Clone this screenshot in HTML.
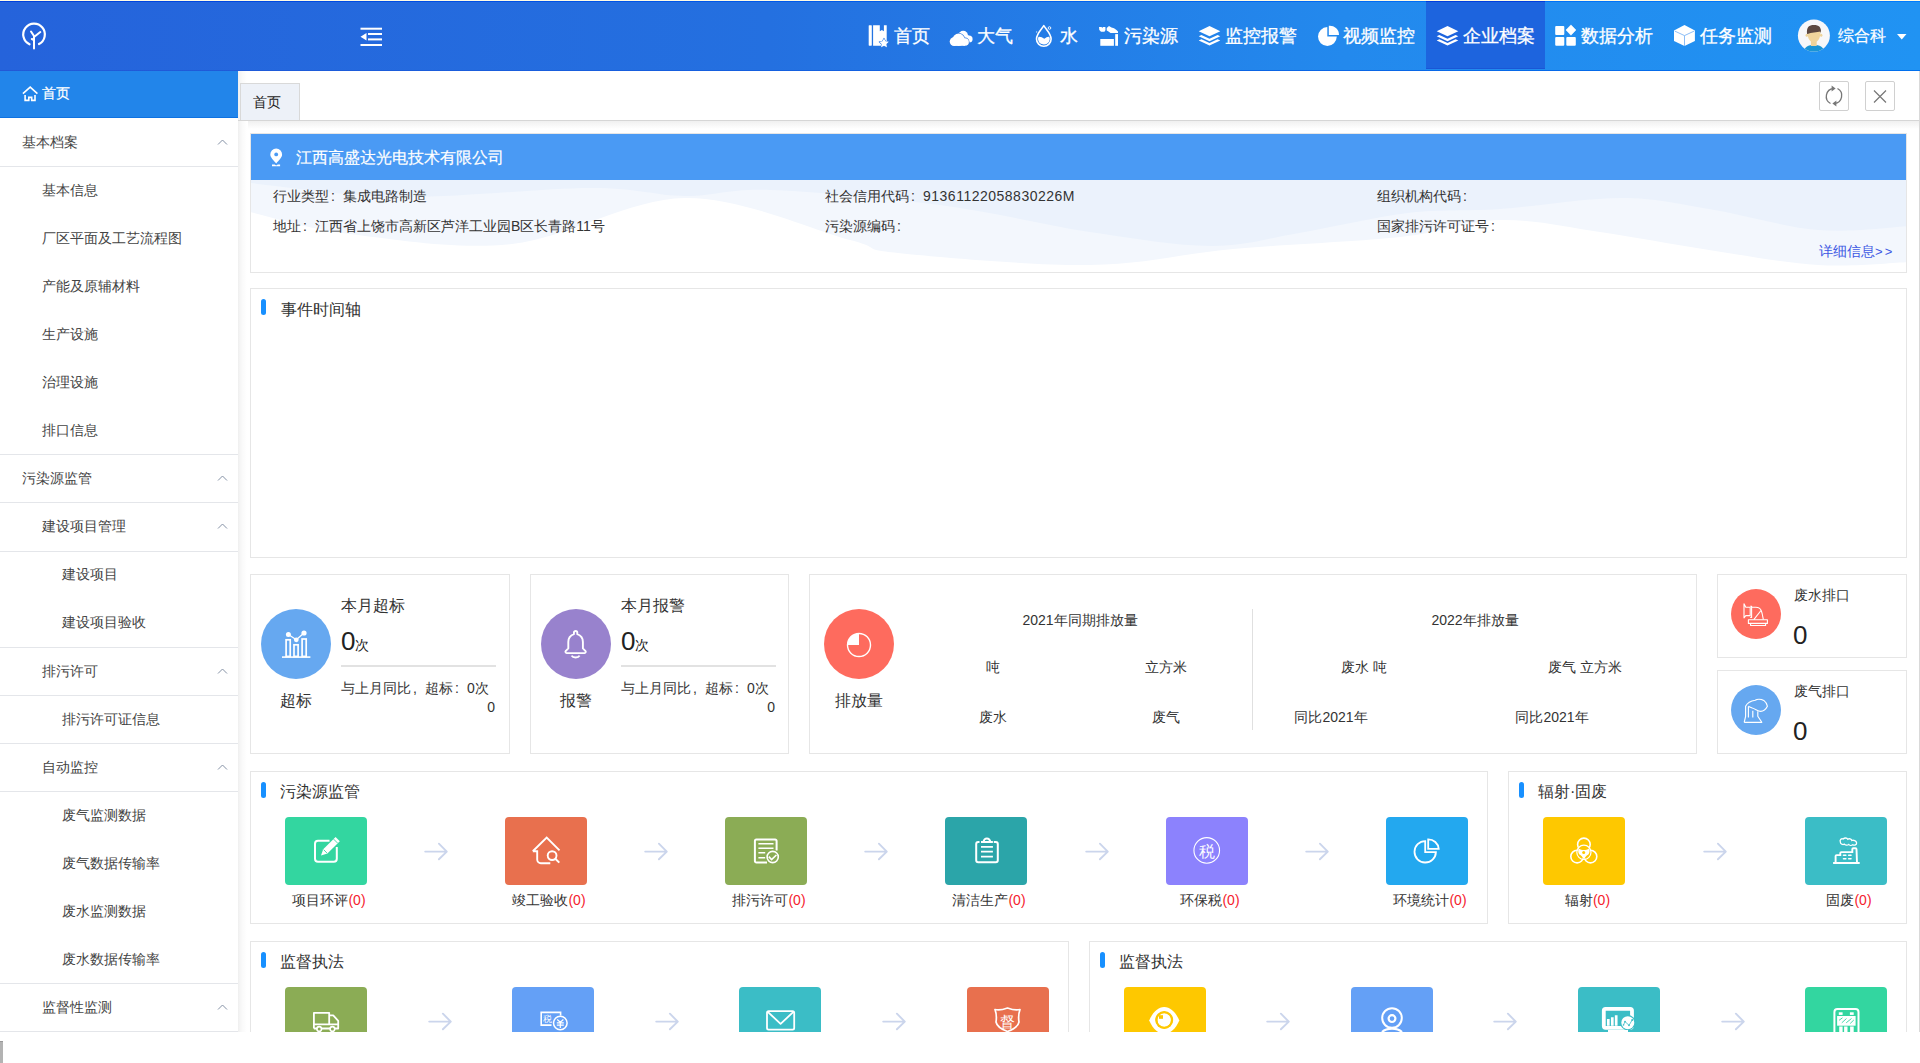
<!DOCTYPE html><html><head><meta charset="utf-8"><style>
*{box-sizing:border-box}
html,body{margin:0;padding:0}
body{width:1920px;height:1063px;overflow:hidden;position:relative;background:#fff;font-family:'Liberation Sans',sans-serif;color:#333}
.ab{position:absolute}
.t{position:absolute;white-space:nowrap;line-height:1}
svg{position:absolute;overflow:visible}
.card{position:absolute;border:1px solid #e6e6e6;background:#fff}
.bar{position:absolute;width:5px;height:16px;border-radius:3px;background:#1890ff}
.tile{position:absolute;width:82px;height:68px;border-radius:4px}
.lbl{position:absolute;font-size:14px;line-height:14px;white-space:nowrap;color:#333;text-align:center;width:160px}
.lbl span{color:#f5222d}
.fc{display:inline-block;width:1em;padding-left:0.15em}
</style></head><body>

<div class="ab" style="left:0;top:0;width:1920px;height:1px;background:#fffbe3"></div>
<div class="ab" style="left:0;top:1px;width:1920px;height:70px;background:linear-gradient(90deg,#2563db 0%,#2470e0 40%,#2389ed 70%,#2093f3 100%)"></div>
<div class="ab" style="left:0;top:1px;width:1920px;height:1px;background:linear-gradient(90deg,#0040dc,#007cff)"></div>
<div class="ab" style="left:0;top:70px;width:1920px;height:1px;background:linear-gradient(90deg,#2358d6,#0a66e6 70%,#0070ee)"></div>
<svg style="left:0;top:0" width="70" height="70" viewBox="0 0 70 70">
<path d="M29.5 44.3 A10.8 10.8 0 1 1 39 44.1" fill="none" stroke="#fff" stroke-width="2.2" stroke-linecap="round"/>
<path d="M34 48.5 L34 36 L31 31.5 M34 37 L40.3 32 M34 40 L31.8 39" fill="none" stroke="#fff" stroke-width="2" stroke-linecap="round" stroke-linejoin="round"/>
</svg>
<svg style="left:360px;top:27px" width="23" height="20" viewBox="0 0 23 20">
<rect x="0.5" y="0.7" width="21.5" height="2" fill="#fff"/>
<rect x="8" y="6" width="14" height="2" fill="#fff"/>
<rect x="8" y="11.4" width="14" height="2" fill="#fff"/>
<rect x="0.5" y="17" width="21.5" height="2" fill="#fff"/>
<path d="M0.5 9.7 L6.5 6 L6.5 13.5 Z" fill="#fff"/>
</svg>
<div class="ab" style="left:1426px;top:2px;width:119px;height:67px;background:#1d64de;border-bottom:1px solid #1a56d6"></div>
<div class="ab" style="left:1426px;top:1px;width:119px;height:1px;background:#003ede"></div>
<div class="t" style="left:894px;top:27px;font-size:18px;color:#fff;-webkit-text-stroke:0.3px #fff">首页</div>
<div class="t" style="left:977px;top:27px;font-size:18px;color:#fff;-webkit-text-stroke:0.3px #fff">大气</div>
<div class="t" style="left:1060px;top:27px;font-size:18px;color:#fff;-webkit-text-stroke:0.3px #fff">水</div>
<div class="t" style="left:1124px;top:27px;font-size:18px;color:#fff;-webkit-text-stroke:0.3px #fff">污染源</div>
<div class="t" style="left:1225px;top:27px;font-size:18px;color:#fff;-webkit-text-stroke:0.3px #fff">监控报警</div>
<div class="t" style="left:1343px;top:27px;font-size:18px;color:#fff;-webkit-text-stroke:0.3px #fff">视频监控</div>
<div class="t" style="left:1463px;top:27px;font-size:18px;color:#fff;-webkit-text-stroke:0.3px #fff">企业档案</div>
<div class="t" style="left:1581px;top:27px;font-size:18px;color:#fff;-webkit-text-stroke:0.3px #fff">数据分析</div>
<div class="t" style="left:1700px;top:27px;font-size:18px;color:#fff;-webkit-text-stroke:0.3px #fff">任务监测</div>
<svg style="left:864px;top:22px" width="30" height="28" viewBox="0 0 30 28">
<rect x="4.7" y="3.2" width="3.1" height="20.5" rx="0.6" fill="#fff"/>
<path d="M9.1 3.2 H15.8 V9.3 L17.85 8.1 L19.9 9.3 V3.2 H22.7 V23.7 H9.1 Z" fill="#fff"/>
<path d="M20 16.4 l1.45 2.95 3.25.47-2.35 2.29.55 3.24-2.9-1.53-2.9 1.53.55-3.24-2.35-2.29 3.25-.47z" fill="#fff" stroke="#2a78e4" stroke-width="1.1" stroke-linejoin="round"/>
<path d="M20 16.4 l1.45 2.95 3.25.47-2.35 2.29.55 3.24-2.9-1.53-2.9 1.53.55-3.24-2.35-2.29 3.25-.47z" fill="#fff"/>
</svg>
<svg style="left:946px;top:22px" width="30" height="28" viewBox="0 0 30 28">
<circle cx="17.2" cy="13.6" r="4.8" fill="#fff"/><circle cx="23" cy="17" r="3.6" fill="#fff"/><rect x="17" y="13.5" width="6" height="7" fill="#fff"/>
<g stroke="#2a78e4" stroke-width="1.2"><circle cx="8" cy="19.6" r="4.3"/><circle cx="12.6" cy="17.8" r="6.2"/><circle cx="19.1" cy="20" r="3.8"/></g>
<g fill="#fff"><circle cx="8" cy="19.6" r="4.3"/><circle cx="12.6" cy="17.8" r="6.2"/><circle cx="19.1" cy="20" r="3.8"/><rect x="8" y="18" width="11" height="5.8"/></g>
</svg>
<svg style="left:1030px;top:22px" width="28" height="28" viewBox="0 0 28 28">
<path d="M13.8 3.6 C11 8 6.5 12 6.5 16.9 A7.3 7.3 0 0 0 21.1 16.9 C21.1 12 16.6 8 13.8 3.6Z" fill="none" stroke="#fff" stroke-width="1.6" stroke-linejoin="round"/>
<path d="M8.4 14.9 C10.5 14.5 12.2 15.6 14.3 16.8 C16.2 15.6 17.6 14.6 19.3 14.9 C19.8 16 19.9 16.8 19.6 18 A5.9 5.9 0 0 1 8.1 17.8 C7.9 16.8 8 15.8 8.4 14.9Z" fill="#fff"/>
<circle cx="19.5" cy="6" r="1.3" fill="none" stroke="#fff" stroke-width="0.9"/>
<circle cx="6.6" cy="10" r="0.7" fill="#fff" opacity="0.7"/>
</svg>
<svg style="left:1094px;top:22px" width="28" height="28" viewBox="0 0 28 28">
<rect x="6.3" y="17" width="13.6" height="6.8" fill="#fff"/><rect x="21.2" y="12.1" width="2.8" height="11.7" fill="#fff"/>
<path d="M5 5 L7.6 5 L8.2 6.2 L8.8 5 L11.4 5 L11.5 8 L10.5 9.7 L7 9.7 L5.3 8Z" fill="#fff"/>
<path d="M12.7 6 L15 4 L17.5 5.5 L20 6.3 L22.5 8 L24 9.5 L24 11 L16.5 11 L14.5 9.5 L12.7 8.5Z" fill="#fff"/>
</svg>
<svg style="left:1194px;top:22px" width="30" height="28" viewBox="0 0 30 28">
<path d="M15.5 4 L26.3 9.3 L15.5 14.2 L4.7 9.3 Z" fill="#fff"/>
<path d="M4.7 14.3 L7.4 12.95 L15.5 16.8 L23.6 12.95 L26.3 14.3 L15.5 19.3 Z" fill="#fff"/>
<path d="M4.7 18.5 L7.4 17.15 L15.5 21 L23.6 17.15 L26.3 18.5 L15.5 23.5 Z" fill="#fff"/>
</svg>
<svg style="left:1313px;top:22px" width="28" height="28" viewBox="0 0 28 28">
<path d="M14.3 5.1 A9.4 9.4 0 1 0 23.8 14.6 H14.3 Z" fill="#fff"/><path d="M15.8 3.7 A9.2 9.2 0 0 1 26 12.9 H15.8 Z" fill="#fff"/>
</svg>
<svg style="left:1432px;top:22px" width="30" height="28" viewBox="0 0 30 28">
<path d="M15.5 4 L26.3 9.3 L15.5 14.2 L4.7 9.3 Z" fill="#fff"/>
<path d="M4.7 14.3 L7.4 12.95 L15.5 16.8 L23.6 12.95 L26.3 14.3 L15.5 19.3 Z" fill="#fff"/>
<path d="M4.7 18.5 L7.4 17.15 L15.5 21 L23.6 17.15 L26.3 18.5 L15.5 23.5 Z" fill="#fff"/>
</svg>
<svg style="left:1551px;top:22px" width="28" height="28" viewBox="0 0 28 28">
<rect x="4.2" y="4" width="9.1" height="8.9" rx="1" fill="#fff"/><path d="M19.95 2.9 L24.9 8 L19.95 13.2 L15 8Z" fill="#fff" stroke="#fff" stroke-width="0.6" stroke-linejoin="round"/>
<rect x="4.2" y="15" width="9.1" height="8.8" rx="1" fill="#fff"/><rect x="15.3" y="15" width="9.5" height="8.8" rx="1" fill="#fff"/>
</svg>
<svg style="left:1670px;top:22px" width="28" height="28" viewBox="0 0 28 28">
<path d="M14.5 2.9 L24.9 8.4 V19 L14.5 24 L4 19 V8.4Z" fill="#fff"/>
<path d="M4.8 9.1 L14.5 13.6 L24.1 9.1 M14.5 13.6 V24" fill="none" stroke="#7fb6f5" stroke-width="0.9"/>
</svg>
<svg style="left:1794px;top:16px" width="40" height="40" viewBox="0 0 40 40">
<defs><clipPath id="av"><circle cx="19.9" cy="19.6" r="16"/></clipPath></defs>
<circle cx="19.9" cy="19.6" r="16" fill="#f7f7f9"/>
<g clip-path="url(#av)">
<path d="M9.5 37 C10 31 14 29 20 29 C26 29 30 31 30.5 37Z" fill="#1a94d4"/>
<rect x="16.9" y="23" width="5.8" height="7" fill="#eed39a"/>
<ellipse cx="12.8" cy="19.2" rx="1.2" ry="1.5" fill="#eed39a"/><ellipse cx="27.2" cy="19.2" rx="1.2" ry="1.5" fill="#eed39a"/>
<path d="M13.3 15 C13.3 22 15.5 26.3 19.9 26.3 C24.3 26.3 26.5 22 26.5 15Z" fill="#f0d59c"/>
<path d="M13 17.7 C12.5 11 15 9 19.9 9 C25 9 27.5 11 27 17.5 L26.5 15.5 C23 16 17 16.5 13.5 18Z" fill="#5c4841"/>
</g></svg>
<div class="t" style="left:1838px;top:28px;font-size:16px;color:#fff;-webkit-text-stroke:0.25px #fff">综合科</div>
<svg style="left:1897px;top:34px" width="10" height="6" viewBox="0 0 10 6"><path d="M0 0 H9.5 L4.75 5.5Z" fill="#fff"/></svg>
<div class="ab" style="left:0;top:71px;width:238px;height:47px;background:#2285ea"></div>
<div class="ab" style="left:0;top:117px;width:238px;height:1px;background:#0e72e2"></div>
<svg style="left:22px;top:86px" width="16" height="16" viewBox="0 0 16 16">
<path d="M0.9 7.6 L8.2 1.1 L15.4 7.6" fill="none" stroke="#fff" stroke-width="1.6"/>
<path d="M3.1 9.1 V14.4 H6.8 V11.4 H9.7 V14.4 H13 V9.1" fill="none" stroke="#fff" stroke-width="1.6"/>
</svg>
<div class="t" style="left:42px;top:86px;font-size:14px;color:#fff;-webkit-text-stroke:0.2px #fff">首页</div>
<div class="t" style="left:22px;top:135px;font-size:14px;color:#444">基本档案</div>
<svg style="left:217px;top:139px" width="11" height="7" viewBox="0 0 11 7"><path d="M1 5.5 L5.5 1 L10 5.5" fill="none" stroke="#8592a6" stroke-width="1"/></svg>
<div class="t" style="left:42px;top:183px;font-size:14px;color:#444">基本信息</div>
<div class="t" style="left:42px;top:231px;font-size:14px;color:#444">厂区平面及工艺流程图</div>
<div class="t" style="left:42px;top:279px;font-size:14px;color:#444">产能及原辅材料</div>
<div class="t" style="left:42px;top:327px;font-size:14px;color:#444">生产设施</div>
<div class="t" style="left:42px;top:375px;font-size:14px;color:#444">治理设施</div>
<div class="t" style="left:42px;top:423px;font-size:14px;color:#444">排口信息</div>
<div class="t" style="left:22px;top:471px;font-size:14px;color:#444">污染源监管</div>
<svg style="left:217px;top:475px" width="11" height="7" viewBox="0 0 11 7"><path d="M1 5.5 L5.5 1 L10 5.5" fill="none" stroke="#8592a6" stroke-width="1"/></svg>
<div class="t" style="left:42px;top:519px;font-size:14px;color:#444">建设项目管理</div>
<svg style="left:217px;top:523px" width="11" height="7" viewBox="0 0 11 7"><path d="M1 5.5 L5.5 1 L10 5.5" fill="none" stroke="#8592a6" stroke-width="1"/></svg>
<div class="t" style="left:62px;top:567px;font-size:14px;color:#444">建设项目</div>
<div class="t" style="left:62px;top:615px;font-size:14px;color:#444">建设项目验收</div>
<div class="t" style="left:42px;top:664px;font-size:14px;color:#444">排污许可</div>
<svg style="left:217px;top:668px" width="11" height="7" viewBox="0 0 11 7"><path d="M1 5.5 L5.5 1 L10 5.5" fill="none" stroke="#8592a6" stroke-width="1"/></svg>
<div class="t" style="left:62px;top:712px;font-size:14px;color:#444">排污许可证信息</div>
<div class="t" style="left:42px;top:760px;font-size:14px;color:#444">自动监控</div>
<svg style="left:217px;top:764px" width="11" height="7" viewBox="0 0 11 7"><path d="M1 5.5 L5.5 1 L10 5.5" fill="none" stroke="#8592a6" stroke-width="1"/></svg>
<div class="t" style="left:62px;top:808px;font-size:14px;color:#444">废气监测数据</div>
<div class="t" style="left:62px;top:856px;font-size:14px;color:#444">废气数据传输率</div>
<div class="t" style="left:62px;top:904px;font-size:14px;color:#444">废水监测数据</div>
<div class="t" style="left:62px;top:952px;font-size:14px;color:#444">废水数据传输率</div>
<div class="t" style="left:42px;top:1000px;font-size:14px;color:#444">监督性监测</div>
<svg style="left:217px;top:1004px" width="11" height="7" viewBox="0 0 11 7"><path d="M1 5.5 L5.5 1 L10 5.5" fill="none" stroke="#8592a6" stroke-width="1"/></svg>
<div class="ab" style="left:0;top:166px;width:238px;height:1px;background:#e4e6ea"></div>
<div class="ab" style="left:0;top:454px;width:238px;height:1px;background:#e4e6ea"></div>
<div class="ab" style="left:0;top:502px;width:238px;height:1px;background:#e4e6ea"></div>
<div class="ab" style="left:0;top:551px;width:238px;height:1px;background:#e4e6ea"></div>
<div class="ab" style="left:0;top:647px;width:238px;height:1px;background:#e4e6ea"></div>
<div class="ab" style="left:0;top:695px;width:238px;height:1px;background:#e4e6ea"></div>
<div class="ab" style="left:0;top:743px;width:238px;height:1px;background:#e4e6ea"></div>
<div class="ab" style="left:0;top:791px;width:238px;height:1px;background:#e4e6ea"></div>
<div class="ab" style="left:0;top:983px;width:238px;height:1px;background:#e4e6ea"></div>
<div class="ab" style="left:0;top:1031px;width:238px;height:1px;background:#e4e6ea"></div>
<div class="ab" style="left:238px;top:71px;width:9px;height:961px;background:linear-gradient(90deg,#efefef 0,#f5f5f5 2px,#fafafa 4.5px,rgba(255,255,255,0) 9px)"></div>
<div class="ab" style="left:240px;top:83px;width:60px;height:37px;background:#edf1f8;border:1px solid #d9d9d9;border-bottom:none"></div>
<div class="t" style="left:253px;top:95px;font-size:14px;color:#222">首页</div>
<div class="ab" style="left:238px;top:120px;width:1681px;height:1px;background:#d6d6d6"></div>
<div class="ab" style="left:248px;top:121px;width:1671px;height:8px;background:linear-gradient(180deg,#f0f0f0,rgba(255,255,255,0))"></div>
<div class="ab" style="left:1919px;top:71px;width:1px;height:961px;background:#d9d9d9"></div>
<div class="ab" style="left:1819px;top:81px;width:30px;height:30px;border:1px solid #d0d0d0;border-radius:2px;background:#fff"></div>
<div class="ab" style="left:1865px;top:81px;width:30px;height:30px;border:1px solid #d0d0d0;border-radius:2px;background:#fff"></div>
<svg style="left:1819px;top:81px" width="30" height="30" viewBox="0 0 30 30">
<path d="M11.5 22.5 A8 8 0 0 1 14.5 7.5" fill="none" stroke="#777" stroke-width="1.3"/>
<path d="M18.5 7.5 A8 8 0 0 1 15.5 22.5" fill="none" stroke="#777" stroke-width="1.3"/>
<path d="M12.6 4.6 L16.6 7.5 L12.6 10.4 Z" fill="#777"/>
<path d="M17.4 19.6 L13.4 22.5 L17.4 25.4 Z" fill="#777"/>
</svg>
<svg style="left:1865px;top:81px" width="30" height="30" viewBox="0 0 30 30">
<path d="M9 9.5 L21 21.5 M21 9.5 L9 21.5" fill="none" stroke="#777" stroke-width="1.2"/>
</svg>
<div class="card" style="left:250px;top:133px;width:1657px;height:140px;background:#fff"></div>
<svg style="left:251px;top:180px;overflow:hidden" width="1655" height="92" viewBox="0 0 1655 92"><rect width="1655" height="92" fill="#ebf2fc"/><path d="M-1 3 C24.0 5.3 92.3 16.2 149 17 C205.7 17.8 291.5 8.2 339 8 C386.5 7.8 404.0 15.7 434 16 C464.0 16.3 476.5 8.5 519 10 C561.5 11.5 635.7 18.0 689 25 C742.3 32.0 793.8 45.2 839 52 C884.2 58.8 925.2 65.8 960 66 C994.8 66.2 1015.2 58.5 1048 53 C1080.8 47.5 1123.5 37.0 1157 33 C1190.5 29.0 1213.5 31.5 1249 29 C1284.5 26.5 1335.2 18.0 1370 18 C1404.8 18.0 1425.2 23.7 1458 29 C1490.8 34.3 1533.5 47.2 1567 50 C1600.5 52.8 1643.7 46.7 1659 46 V92 H0 Z" fill="#f3f7fd"/><path d="M-1 32 C15.7 35.7 55.3 48.7 99 54 C142.7 59.3 205.2 70.0 261 64 C316.8 58.0 377.7 18.7 434 18 C490.3 17.3 563.5 50.8 599 60 C634.5 69.2 607.0 68.8 647 73 C687.0 77.2 783.2 85.7 839 85 C894.8 84.3 930.3 73.7 982 69 C1033.7 64.3 1104.5 61.8 1149 57 C1193.5 52.2 1215.7 40.8 1249 40 C1282.3 39.2 1314.2 47.0 1349 52 C1383.8 57.0 1421.7 64.5 1458 70 C1494.3 75.5 1533.5 83.0 1567 85 C1600.5 87.0 1643.7 82.5 1659 82 V92 H0 Z" fill="#fff"/></svg>
<div class="ab" style="left:251px;top:134px;width:1655px;height:46px;background:#4a9af4"></div>
<svg style="left:270px;top:148px" width="13" height="19" viewBox="0 0 13 19">
<path d="M6.2 15.6 C3.6 12.2 0.3 9.6 0.3 6.5 A5.9 5.9 0 0 1 12.1 6.5 C12.1 9.6 8.8 12.2 6.2 15.6Z" fill="#fff"/>
<circle cx="6.2" cy="6.4" r="1.9" fill="#4a9af4"/>
<path d="M2 16.6 H4.6 L6.2 17.4 L7.8 16.6 H10.1 V18.2 H2Z" fill="#fff"/>
</svg>
<div class="t" style="left:296px;top:150px;font-size:16px;color:#fff;-webkit-text-stroke:0.2px #fff">江西高盛达光电技术有限公司</div>
<div class="t" style="left:273px;top:189px;font-size:14px;color:#333">行业类型<span class="fc">:</span>集成电路制造</div>
<div class="t" style="left:825px;top:189px;font-size:14px;color:#333">社会信用代码<span class="fc">:</span><span style="letter-spacing:0.5px">91361122058830226M</span></div>
<div class="t" style="left:1377px;top:189px;font-size:14px;color:#333">组织机构代码<span class="fc">:</span></div>
<div class="t" style="left:273px;top:219px;font-size:14px;color:#333">地址<span class="fc">:</span>江西省上饶市高新区芦洋工业园B区长青路11号</div>
<div class="t" style="left:825px;top:219px;font-size:14px;color:#333">污染源编码<span class="fc">:</span></div>
<div class="t" style="left:1377px;top:219px;font-size:14px;color:#333">国家排污许可证号<span class="fc">:</span></div>
<div class="t" style="left:1819px;top:244px;font-size:14px;color:#3d57e3">详细信息<span style="font-size:13px;letter-spacing:2.2px">&gt;&gt;</span></div>
<div class="card" style="left:250px;top:288px;width:1657px;height:270px"></div>
<div class="bar" style="left:261px;top:299px"></div>
<div class="t" style="left:281px;top:302px;font-size:16px;color:#333">事件时间轴</div>
<div class="card" style="left:250px;top:574px;width:260px;height:180px"></div>
<div class="ab" style="left:261px;top:609px;width:70px;height:70px;border-radius:50%;background:#66a8f0"></div>
<svg style="left:276px;top:624px" width="40" height="40" viewBox="0 0 40 40">
<path d="M12.4 10.5 L20.3 15.8 L28 9" fill="none" stroke="#fff" stroke-width="1.3"/>
<circle cx="12.4" cy="10.5" r="2.5" fill="#fff"/><circle cx="20.3" cy="15.8" r="2.4" fill="#fff"/><circle cx="28" cy="9" r="2.6" fill="#fff"/>
<rect x="10.1" y="15.8" width="4.1" height="16.6" fill="none" stroke="#fff" stroke-width="1.7"/>
<rect x="18" y="20.8" width="4.1" height="11.6" fill="none" stroke="#fff" stroke-width="1.7"/>
<rect x="26.1" y="15" width="4.1" height="17.4" fill="none" stroke="#fff" stroke-width="1.7"/>
<path d="M6 33.1 H34.4" stroke="#fff" stroke-width="1.6"/>
</svg>
<div class="t" style="left:266px;width:60px;text-align:center;top:693px;font-size:16px;color:#333">超标</div>
<div class="t" style="left:341px;top:598px;font-size:16px;color:#333">本月超标</div>
<div class="t" style="left:341px;top:628px;font-size:26px;color:#222">0<span style="font-size:14px;position:relative;top:0px">次</span></div>
<div class="ab" style="left:341px;top:665px;width:155px;height:2px;background:#e2e2e2"></div>
<div class="t" style="left:341px;top:681px;font-size:14px;color:#333">与上月同比<span class="fc">,</span>超标<span class="fc">:</span>0次</div>
<div class="t" style="left:445px;width:50px;text-align:right;top:700px;font-size:14px;color:#333">0</div>
<div class="card" style="left:530px;top:574px;width:259px;height:180px"></div>
<div class="ab" style="left:541px;top:609px;width:70px;height:70px;border-radius:50%;background:#9882cd"></div>
<svg style="left:556px;top:624px" width="40" height="40" viewBox="0 0 40 40">
<path d="M19.6 7 a1.7 1.7 0 0 1 1.7 1.7 V10.2 C24.6 11.4 26.9 14 26.9 18 V24.4 L29.3 26.8 a1.3 1.3 0 0 1 -0.9 2.3 H10.8 a1.3 1.3 0 0 1 -0.9 -2.3 L12.3 24.4 V18 C12.3 14 14.6 11.4 17.9 10.2 V8.7 a1.7 1.7 0 0 1 1.7 -1.7 Z" fill="none" stroke="#fff" stroke-width="1.9" stroke-linejoin="round"/>
<path d="M15.6 31.6 C17 34.2 22.2 34.2 23.6 31.6" fill="none" stroke="#fff" stroke-width="1.9"/>
</svg>
<div class="t" style="left:546px;width:60px;text-align:center;top:693px;font-size:16px;color:#333">报警</div>
<div class="t" style="left:621px;top:598px;font-size:16px;color:#333">本月报警</div>
<div class="t" style="left:621px;top:628px;font-size:26px;color:#222">0<span style="font-size:14px;position:relative;top:0px">次</span></div>
<div class="ab" style="left:621px;top:665px;width:155px;height:2px;background:#e2e2e2"></div>
<div class="t" style="left:621px;top:681px;font-size:14px;color:#333">与上月同比<span class="fc">,</span>超标<span class="fc">:</span>0次</div>
<div class="t" style="left:725px;width:50px;text-align:right;top:700px;font-size:14px;color:#333">0</div>
<div class="card" style="left:809px;top:574px;width:888px;height:180px"></div>
<div class="ab" style="left:824px;top:609px;width:70px;height:70px;border-radius:50%;background:#fe6b5e"></div>
<svg style="left:844px;top:630px" width="30" height="30" viewBox="0 0 30 30">
<circle cx="15" cy="15" r="11.5" fill="none" stroke="#fff" stroke-width="1.4"/>
<path d="M15 15 V3.5 A11.5 11.5 0 0 0 3.5 15 Z" fill="#fff"/>
</svg>
<div class="t" style="left:829px;width:60px;text-align:center;top:693px;font-size:16px;color:#333">排放量</div>
<div class="t" style="left:980px;width:200px;text-align:center;top:613px;font-size:14px;color:#333">2021年同期排放量</div>
<div class="t" style="left:893px;width:200px;text-align:center;top:660px;font-size:14px;color:#333">吨</div>
<div class="t" style="left:1066px;width:200px;text-align:center;top:660px;font-size:14px;color:#333">立方米</div>
<div class="t" style="left:893px;width:200px;text-align:center;top:710px;font-size:14px;color:#333">废水</div>
<div class="t" style="left:1066px;width:200px;text-align:center;top:710px;font-size:14px;color:#333">废气</div>
<div class="ab" style="left:1252px;top:609px;width:1px;height:121px;background:#e0e0e0"></div>
<div class="t" style="left:1375px;width:200px;text-align:center;top:613px;font-size:14px;color:#333">2022年排放量</div>
<div class="t" style="left:1264px;width:200px;text-align:center;top:660px;font-size:14px;color:#333">废水 吨</div>
<div class="t" style="left:1485px;width:200px;text-align:center;top:660px;font-size:14px;color:#333">废气 立方米</div>
<div class="t" style="left:1231px;width:200px;text-align:center;top:710px;font-size:14px;color:#333">同比2021年</div>
<div class="t" style="left:1452px;width:200px;text-align:center;top:710px;font-size:14px;color:#333">同比2021年</div>
<div class="card" style="left:1717px;top:574px;width:190px;height:84px"></div>
<div class="ab" style="left:1731px;top:589px;width:50px;height:50px;border-radius:50%;background:#fe6b5e"></div>
<svg style="left:1740px;top:598px" width="32" height="32" viewBox="0 0 32 32"><g fill="none" stroke="#fff" stroke-width="1.1" stroke-linejoin="round">
<path d="M4 5.8 L5.8 9.2 H10.2 V17.6 H5.8 L4 19.8 Z"/>
<path d="M10.2 8.2 H11.6 V19.4 H10.2"/>
<path d="M11.6 9.2 H15.8 C18.5 9.2 20.6 10.8 21.3 12.8 C22.3 15.2 22.8 18.8 23.3 21.6"/>
<path d="M13.8 21.6 L21 12.5"/>
<path d="M8.4 21.8 H27.4 V25.4 H8.4 Z"/>
<path d="M10.6 25.4 V27.5 H25.6 V25.4"/>
</g></svg>
<div class="t" style="left:1794px;top:588px;font-size:14px;color:#333">废水排口</div>
<div class="t" style="left:1793px;top:622px;font-size:26px;color:#222">0</div>
<div class="card" style="left:1717px;top:670px;width:190px;height:84px"></div>
<div class="ab" style="left:1731px;top:685px;width:50px;height:50px;border-radius:50%;background:#66a8f0"></div>
<svg style="left:1740px;top:694px" width="32" height="32" viewBox="0 0 32 32"><g fill="none" stroke="#fff" stroke-width="1.15" stroke-linejoin="round">
<path d="M4.2 28.3 H21.8 L17.8 22.3 V17.2"/>
<path d="M4.2 28.3 L5.6 22.3 V12.2 C7.5 8.5 11 6.8 15.2 6.2 C17 5 21 5 23.8 6.4 C25.8 8 27.3 10.5 27.4 12.3 C25.8 15.5 23.3 17.4 20.6 17.4 C18.2 17.4 15.4 15 12.3 14 C10.6 13.3 9 12.6 8.3 12.2"/>
<path d="M8.4 12.6 V23.6 M12.8 16.8 V23.6"/>
</g></svg>
<div class="t" style="left:1794px;top:684px;font-size:14px;color:#333">废气排口</div>
<div class="t" style="left:1793px;top:718px;font-size:26px;color:#222">0</div>
<div class="card" style="left:250px;top:771px;width:1238px;height:153px"></div>
<div class="bar" style="left:261px;top:782px"></div>
<div class="t" style="left:280px;top:784px;font-size:16px;color:#333">污染源监管</div>
<div class="card" style="left:1508px;top:771px;width:399px;height:153px"></div>
<div class="bar" style="left:1519px;top:782px"></div>
<div class="t" style="left:1538px;top:784px;font-size:16px;color:#333">辐射·固废</div>
<div class="card" style="left:250px;top:941px;width:819px;height:200px"></div>
<div class="bar" style="left:261px;top:952px"></div>
<div class="t" style="left:280px;top:954px;font-size:16px;color:#333">监督执法</div>
<div class="card" style="left:1089px;top:941px;width:818px;height:200px"></div>
<div class="bar" style="left:1100px;top:952px"></div>
<div class="t" style="left:1119px;top:954px;font-size:16px;color:#333">监督执法</div>
<div class="tile" style="left:285px;top:817px;background:#33d6a0"></div>
<div class="lbl" style="left:249px;top:893px">项目环评<span>(0)</span></div>
<div class="tile" style="left:505px;top:817px;background:#e8704e"></div>
<div class="lbl" style="left:469px;top:893px">竣工验收<span>(0)</span></div>
<div class="tile" style="left:725px;top:817px;background:#8bac55"></div>
<div class="lbl" style="left:689px;top:893px">排污许可<span>(0)</span></div>
<div class="tile" style="left:945px;top:817px;background:#2ba5a9"></div>
<div class="lbl" style="left:909px;top:893px">清洁生产<span>(0)</span></div>
<div class="tile" style="left:1166px;top:817px;background:#8c82fd"></div>
<div class="lbl" style="left:1130px;top:893px">环保税<span>(0)</span></div>
<div class="tile" style="left:1386px;top:817px;background:#23a8ef"></div>
<div class="lbl" style="left:1350px;top:893px">环境统计<span>(0)</span></div>
<svg style="left:306px;top:831px" width="40" height="40" viewBox="0 0 40 40"><path d="M23.5 9.7 H12 A3 3 0 0 0 9 12.7 V27.8 A3 3 0 0 0 12 30.8 H27.8 A3 3 0 0 0 30.8 27.8 V16" fill="none" stroke="#fff" stroke-width="2"/>
<path d="M15 24.5 L17.2 18.3 L29.6 6.1 L33.8 10.3 L21.4 22.5 Z" fill="#fff"/>
<path d="M17.6 18.6 L20.9 22 M27.6 8.1 L31.7 12.2" stroke="#33d6a0" stroke-width="0.9"/></svg>
<svg style="left:526px;top:831px" width="40" height="40" viewBox="0 0 40 40"><path d="M6.8 20.3 L20.7 6.6 L33.5 19.4 M6.8 20.3 H11.2 V28.6 A3.6 3.6 0 0 0 14.8 32.2 H24.3" fill="none" stroke="#fff" stroke-width="1.9" stroke-linejoin="miter"/>
<circle cx="26.1" cy="24.6" r="4.4" fill="none" stroke="#fff" stroke-width="1.9"/><path d="M29.3 27.8 L33.3 31.6" fill="none" stroke="#fff" stroke-width="2"/></svg>
<svg style="left:746px;top:831px" width="40" height="40" viewBox="0 0 40 40"><path d="M21 31.4 H10.4 A1.5 1.5 0 0 1 8.9 29.9 V10 A1.5 1.5 0 0 1 10.4 8.5 H29.1 A1.5 1.5 0 0 1 30.6 10 V19.5" fill="none" stroke="#fff" stroke-width="2"/>
<path d="M12.4 12.8 H27.5 M12.4 17.3 H27.5 M12.4 21.8 H19.2 M12.4 26.7 H19.2" fill="none" stroke="#fff" stroke-width="1.6"/>
<circle cx="26.7" cy="26" r="7" fill="#8bac55"/><circle cx="26.7" cy="26" r="5.6" fill="none" stroke="#fff" stroke-width="1.6"/>
<path d="M22.8 25.6 L25.6 28.5 L30.4 24" fill="none" stroke="#fff" stroke-width="1.7"/></svg>
<svg style="left:966px;top:831px" width="40" height="40" viewBox="0 0 40 40"><path d="M13.5 11 H12.2 A2 2 0 0 0 10.2 13 V29.2 A2 2 0 0 0 12.2 31.2 H29.8 A2 2 0 0 0 31.8 29.2 V13 A2 2 0 0 0 29.8 11 H27.8" fill="none" stroke="#fff" stroke-width="2"/>
<path d="M15 10.9 H26.9 M17.6 10.9 A3.3 3.3 0 0 1 24.2 10.9" fill="none" stroke="#fff" stroke-width="2"/>
<path d="M15 15.8 H26.9 M15 20.7 H26.9 M15 25.6 H26.9" fill="none" stroke="#fff" stroke-width="1.7"/></svg>
<svg style="left:1187px;top:831px" width="40" height="40" viewBox="0 0 40 40"><circle cx="19.75" cy="19.4" r="12.8" fill="none" stroke="#fff" stroke-width="1.1"/>
<text x="19.8" y="26.2" font-size="15.5" text-anchor="middle" fill="#fff" font-family="Liberation Sans,sans-serif">税</text></svg>
<svg style="left:1407px;top:831px" width="40" height="40" viewBox="0 0 40 40"><path d="M18.2 10.1 A10.7 10.7 0 1 0 28.9 21.1 H18.2 Z" fill="none" stroke="#fff" stroke-width="1.8" stroke-linejoin="miter"/>
<path d="M21.2 8.3 V17.8 H31.7 A10.5 10.5 0 0 0 21.2 8.3 Z" fill="none" stroke="#fff" stroke-width="1.8" stroke-linejoin="miter"/></svg>
<svg style="left:424px;top:842px" width="24" height="20" viewBox="0 0 24 20"><path d="M1.2 9.6 H22.6 M14.9 1.7 L22.8 9.6 L14.9 17.3" fill="none" stroke="#cbd5ec" stroke-width="1.9" stroke-linecap="round" stroke-linejoin="round"/></svg>
<svg style="left:644px;top:842px" width="24" height="20" viewBox="0 0 24 20"><path d="M1.2 9.6 H22.6 M14.9 1.7 L22.8 9.6 L14.9 17.3" fill="none" stroke="#cbd5ec" stroke-width="1.9" stroke-linecap="round" stroke-linejoin="round"/></svg>
<svg style="left:864px;top:842px" width="24" height="20" viewBox="0 0 24 20"><path d="M1.2 9.6 H22.6 M14.9 1.7 L22.8 9.6 L14.9 17.3" fill="none" stroke="#cbd5ec" stroke-width="1.9" stroke-linecap="round" stroke-linejoin="round"/></svg>
<svg style="left:1085px;top:842px" width="24" height="20" viewBox="0 0 24 20"><path d="M1.2 9.6 H22.6 M14.9 1.7 L22.8 9.6 L14.9 17.3" fill="none" stroke="#cbd5ec" stroke-width="1.9" stroke-linecap="round" stroke-linejoin="round"/></svg>
<svg style="left:1305px;top:842px" width="24" height="20" viewBox="0 0 24 20"><path d="M1.2 9.6 H22.6 M14.9 1.7 L22.8 9.6 L14.9 17.3" fill="none" stroke="#cbd5ec" stroke-width="1.9" stroke-linecap="round" stroke-linejoin="round"/></svg>
<div class="tile" style="left:1543px;top:817px;background:#fec800"></div>
<div class="lbl" style="left:1507.5px;top:893px">辐射<span>(0)</span></div>
<div class="tile" style="left:1805px;top:817px;background:#3bbdc6"></div>
<div class="lbl" style="left:1769px;top:893px">固废<span>(0)</span></div>
<svg style="left:1703px;top:842px" width="24" height="20" viewBox="0 0 24 20"><path d="M1.2 9.6 H22.6 M14.9 1.7 L22.8 9.6 L14.9 17.3" fill="none" stroke="#cbd5ec" stroke-width="1.9" stroke-linecap="round" stroke-linejoin="round"/></svg>
<svg style="left:1564px;top:831px" width="40" height="40" viewBox="0 0 40 40"><g fill="none" stroke="#fff" stroke-width="1.6"><circle cx="19.9" cy="13.4" r="6.3"/><circle cx="13.1" cy="25.6" r="6.3"/><circle cx="26.5" cy="25.6" r="6.3"/></g>
<circle cx="19.9" cy="21.3" r="6.4" fill="#fec800"/>
<circle cx="19.9" cy="21.3" r="7.1" fill="none" stroke="#fff" stroke-width="1.2"/>
<path d="M14.6 17.4 C16.5 18.6 18 18.9 19.9 18.9 C21.8 18.9 23.3 18.6 25.2 17.4 C25.9 19.8 25.6 21.8 24.4 23.6 C22.6 24.6 21.2 26 20.8 27.6 H19 C18.6 26 17.2 24.6 15.4 23.6 C14.2 21.8 13.9 19.8 14.6 17.4Z" fill="#fff"/>
<circle cx="19.7" cy="21.4" r="1.5" fill="#fec800"/>
</svg>
<svg style="left:1826px;top:831px" width="40" height="40" viewBox="0 0 40 40"><path d="M7.1 32 H33.7" fill="none" stroke="#fff" stroke-width="2"/>
<path d="M9.6 32 V25.1 A1 1 0 0 1 10.6 24.1 H14.3 V22.1 A1 1 0 0 1 15.3 21.1 H26.3 V18.3 A1 1 0 0 1 27.3 17.3 H29.5 A1 1 0 0 1 30.5 18.3 L31 32" fill="none" stroke="#fff" stroke-width="1.9"/>
<path d="M17.5 24.3 H19.8 M22.7 24.3 H25 M17.5 27.8 H19.8 M22.7 27.8 H25" fill="none" stroke="#fff" stroke-width="1.6" stroke-linecap="round"/>
<path d="M14.3 11 C13.5 8.5 15.5 7.2 17.3 8 C18.5 6.5 21 6.7 21.8 8.3 C23 7.3 25.5 7.8 25.8 9.5 C27.5 8.8 30.3 9.8 30.6 11.8 C30.8 13.8 28.5 14.8 26.8 13.8 C25.5 14.7 23.5 14.5 22.8 13.5 C21.5 14.5 19 14.3 18.3 13.2 C16.8 14 14.5 13.2 14.3 11Z" fill="none" stroke="#fff" stroke-width="1.3"/></svg>
<div class="tile" style="left:285px;top:987px;background:#8bac55"></div>
<div class="tile" style="left:512px;top:987px;background:#64a0f6"></div>
<div class="tile" style="left:739px;top:987px;background:#3bbdc6"></div>
<div class="tile" style="left:967px;top:987px;background:#e8704e"></div>
<div class="tile" style="left:1124px;top:987px;background:#fec800"></div>
<div class="tile" style="left:1351px;top:987px;background:#64a0f6"></div>
<div class="tile" style="left:1578px;top:987px;background:#3bbdc6"></div>
<div class="tile" style="left:1805px;top:987px;background:#33d6a0"></div>
<svg style="left:428px;top:1012px" width="24" height="20" viewBox="0 0 24 20"><path d="M1.2 9.6 H22.6 M14.9 1.7 L22.8 9.6 L14.9 17.3" fill="none" stroke="#cbd5ec" stroke-width="1.9" stroke-linecap="round" stroke-linejoin="round"/></svg>
<svg style="left:655px;top:1012px" width="24" height="20" viewBox="0 0 24 20"><path d="M1.2 9.6 H22.6 M14.9 1.7 L22.8 9.6 L14.9 17.3" fill="none" stroke="#cbd5ec" stroke-width="1.9" stroke-linecap="round" stroke-linejoin="round"/></svg>
<svg style="left:882px;top:1012px" width="24" height="20" viewBox="0 0 24 20"><path d="M1.2 9.6 H22.6 M14.9 1.7 L22.8 9.6 L14.9 17.3" fill="none" stroke="#cbd5ec" stroke-width="1.9" stroke-linecap="round" stroke-linejoin="round"/></svg>
<svg style="left:1266px;top:1012px" width="24" height="20" viewBox="0 0 24 20"><path d="M1.2 9.6 H22.6 M14.9 1.7 L22.8 9.6 L14.9 17.3" fill="none" stroke="#cbd5ec" stroke-width="1.9" stroke-linecap="round" stroke-linejoin="round"/></svg>
<svg style="left:1493px;top:1012px" width="24" height="20" viewBox="0 0 24 20"><path d="M1.2 9.6 H22.6 M14.9 1.7 L22.8 9.6 L14.9 17.3" fill="none" stroke="#cbd5ec" stroke-width="1.9" stroke-linecap="round" stroke-linejoin="round"/></svg>
<svg style="left:1721px;top:1012px" width="24" height="20" viewBox="0 0 24 20"><path d="M1.2 9.6 H22.6 M14.9 1.7 L22.8 9.6 L14.9 17.3" fill="none" stroke="#cbd5ec" stroke-width="1.9" stroke-linecap="round" stroke-linejoin="round"/></svg>
<svg style="left:300px;top:995px" width="50" height="40" viewBox="0 0 50 40"><path d="M13.9 33.5 V17.8 H29.2 V29.2 M13.9 29.4 H38.2 M29.2 20.3 H33.2 L38.2 25.8 V33.5 H13.9" fill="none" stroke="#fff" stroke-width="1.8" stroke-linejoin="round"/>
<circle cx="19.2" cy="33.9" r="2.3" fill="#8bac55" stroke="#fff" stroke-width="1.6"/><circle cx="32.4" cy="33.9" r="2.3" fill="#8bac55" stroke="#fff" stroke-width="1.6"/></svg>
<svg style="left:527px;top:995px" width="50" height="40" viewBox="0 0 50 40"><path d="M24.5 30.1 H14.2 V17.4 H33.6 V20.5" fill="none" stroke="#fff" stroke-width="1.6"/>
<text x="20" y="27.3" font-size="8.5" text-anchor="middle" fill="#fff" font-family="Liberation Sans,sans-serif">税</text>
<circle cx="33.3" cy="28" r="6.8" fill="none" stroke="#fff" stroke-width="1.5"/>
<path d="M30.2 24.5 L33.3 27.3 L36.4 24.5 M29.8 27.8 H36.8 M29.8 30.2 H36.8 M33.3 27.3 V33" fill="none" stroke="#fff" stroke-width="1.2"/></svg>
<svg style="left:755px;top:995px" width="50" height="40" viewBox="0 0 50 40"><rect x="12" y="16.1" width="27.2" height="18.6" rx="1.6" fill="none" stroke="#fff" stroke-width="1.8"/>
<path d="M12.5 16.6 L25.6 28.8 L38.7 16.6" fill="none" stroke="#fff" stroke-width="1.8" stroke-linejoin="round"/></svg>
<svg style="left:983px;top:995px" width="50" height="40" viewBox="0 0 50 40"><path d="M12 14.5 C15.5 15.5 20.5 14.5 24.5 13 C28.5 14.5 33.5 15.5 37 14.5 C35 20 35.5 24 36 27 C35 32 30 34.5 24.5 36.5 C19 34.5 14 32 13 27 C13.5 24 14 20 12 14.5Z" fill="none" stroke="#fff" stroke-width="1.7" stroke-linejoin="round"/>
<text x="24.5" y="31.6" font-size="14.5" text-anchor="middle" fill="#fff" font-family="Liberation Sans,sans-serif">督</text></svg>
<svg style="left:1139px;top:995px" width="50" height="40" viewBox="0 0 50 40"><path d="M10.2 25.4 C14 17 19 12 25.2 12 C31.4 12 36.5 17 40.3 25.4 C36.5 33.8 31.4 38.8 25.2 38.8 C19 38.8 14 33.8 10.2 25.4Z" fill="#fff"/>
<circle cx="25.2" cy="25" r="9" fill="#fec800"/><circle cx="25.2" cy="25" r="6.7" fill="#fff"/>
<circle cx="25.4" cy="25.4" r="5.7" fill="#fff"/><rect x="20" y="20.2" width="4" height="3.6" fill="#fec800"/>
<circle cx="25.2" cy="25" r="7.8" fill="none" stroke="#fec800" stroke-width="1.6"/></svg>
<svg style="left:1366px;top:995px" width="50" height="40" viewBox="0 0 50 40"><circle cx="26" cy="23" r="9.8" fill="none" stroke="#fff" stroke-width="2"/><circle cx="26" cy="23.6" r="3.4" fill="none" stroke="#fff" stroke-width="2.2"/>
<path d="M16 37 C19 34.3 22.5 33.6 26 33.6 C29.5 33.6 33 34.3 36 37" fill="none" stroke="#fff" stroke-width="2.2"/></svg>
<svg style="left:1593px;top:995px" width="50" height="40" viewBox="0 0 50 40"><rect x="10.8" y="13.8" width="28.2" height="19" rx="1.8" fill="none" stroke="#fff" stroke-width="3.8"/>
<path d="M15.3 30.7 V24.1 M19.3 30.7 V22.2 M23.2 30.7 V20.3" fill="none" stroke="#fff" stroke-width="2.7"/>
<circle cx="34.8" cy="27.7" r="7.6" fill="#3bbdc6"/><circle cx="34.8" cy="27.7" r="6.5" fill="#fff"/>
<path d="M30.5 30 L32 26.6 L36 30.3 L39.2 25" fill="none" stroke="#3bbdc6" stroke-width="0.8"/>
<circle cx="32" cy="26.6" r="0.9" fill="#3bbdc6"/><circle cx="36" cy="30.3" r="0.9" fill="#3bbdc6"/><circle cx="39.2" cy="25" r="1" fill="#3bbdc6"/><circle cx="30.5" cy="30" r="0.8" fill="#3bbdc6"/>
<rect x="15" y="35" width="20" height="3" fill="#fff"/></svg>
<svg style="left:1820px;top:995px" width="50" height="40" viewBox="0 0 50 40"><rect x="14.4" y="14" width="24.1" height="26" rx="3" fill="none" stroke="#fff" stroke-width="2"/>
<rect x="18.8" y="17.3" width="3.8" height="2.6" fill="#fff"/><rect x="29.9" y="17.3" width="3.8" height="2.6" fill="#fff"/>
<rect x="17.1" y="21" width="18.5" height="9.7" fill="#fff"/>
<path d="M19 25.3 L22.5 22.8 M21.8 27.8 L26.5 23.5 M26.2 27.8 L31.5 23.5 M30.2 28.5 L33.8 25" stroke="#33d6a0" stroke-width="0.9"/>
<rect x="19.2" y="31.5" width="3.4" height="6" fill="#fff"/><rect x="24.1" y="31.5" width="3.4" height="6" fill="#fff"/><rect x="30.1" y="31.5" width="3.6" height="6" fill="#fff"/></svg>
<div class="ab" style="left:0;top:1032px;width:1920px;height:31px;background:#fff"></div>
<div class="ab" style="left:0;top:1041px;width:3px;height:22px;background:#b3b3b3;border-top:1px solid #999"></div>
</body></html>
